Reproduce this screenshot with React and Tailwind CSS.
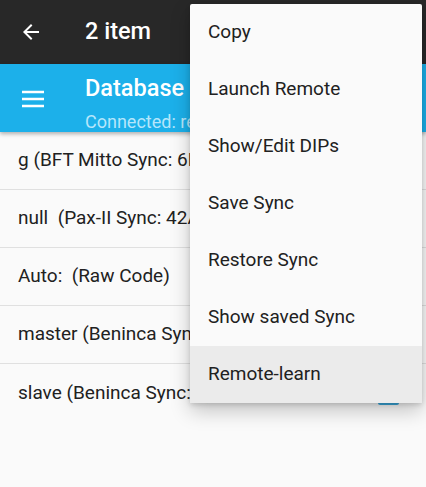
import React from 'react';

const rows = [
  'g (BFT Mitto Sync: 6F2A)',
  'null  (Pax-II Sync: 42A1)',
  'Auto:  (Raw Code)',
  'master (Beninca Sync: 1)',
  'slave (Beninca Sync: 2)',
];

const menu = [
  'Copy',
  'Launch Remote',
  'Show/Edit DIPs',
  'Save Sync',
  'Restore Sync',
  'Show saved Sync',
  'Remote-learn',
];

export default function App() {
  return (
    <div
      className="relative w-[426px] h-[487px] overflow-hidden bg-[#fafafa]"
      style={{ fontFamily: 'Roboto, "Noto Sans", sans-serif' }}
    >
      {/* action mode bar */}
      <div className="flex items-center h-[64px] bg-[#282828]">
        <svg width="24" height="24" viewBox="0 0 24 24" className="ml-[19px]">
          <path d="M20 11H7.83l5.59-5.59L12 4l-8 8 8 8 1.41-1.41L7.83 13H20v-2z" fill="#fff" />
        </svg>
        <span className="ml-[42px] text-[23.5px] font-medium text-white">2 item</span>
      </div>

      {/* toolbar */}
      <div className="relative z-10 flex items-start h-[68px] bg-[#1cb0ea] shadow-[0_2px_4px_rgba(0,0,0,0.3)]">
        <svg width="24" height="18" viewBox="0 0 24 18" className="ml-[21px] mt-[26px]">
          <path d="M1 2h22M1 9h22M1 16h22" stroke="#fff" strokeWidth="2.6" />
        </svg>
        <div className="ml-[40px] flex flex-col pt-[10px]">
          <span className="text-[23.5px] font-medium text-white leading-[28px]">Database</span>
          <span className="text-[18px] text-[#b5e6fb] leading-[20px] mt-[10px] whitespace-nowrap">Connected: remote</span>
        </div>
      </div>

      {/* list */}
      <div className="flex flex-col">
        {rows.map((r, i) => (
          <div
            key={i}
            className={
              'relative flex items-center h-[58px] pl-[18px] text-[19px] text-[#212121] ' +
              (i < rows.length - 1 ? 'border-b border-[#e0e0e0]' : '')
            }
          >
            <span className="whitespace-pre">{r}</span>
            {i === rows.length - 1 && (
              <span className="absolute left-[378px] top-[10px] w-[21px] h-[31px] rounded-[2px] bg-[#3aa8dc]" />
            )}
          </div>
        ))}
      </div>

      {/* overflow menu */}
      <div className="absolute z-20 left-[190px] top-[4px] w-[232px] bg-[#fafafa] rounded-[2px] shadow-[0_8px_20px_rgba(0,0,0,0.22),0_2px_5px_rgba(0,0,0,0.15)] flex flex-col">
        {menu.map((m, i) => (
          <div
            key={m}
            className={
              'flex items-center h-[57px] pl-[18px] text-[19px] text-[#212121] ' +
              (i === menu.length - 1 ? 'bg-[#ebebeb]' : '')
            }
          >
            {m}
          </div>
        ))}
      </div>
    </div>
  );
}
